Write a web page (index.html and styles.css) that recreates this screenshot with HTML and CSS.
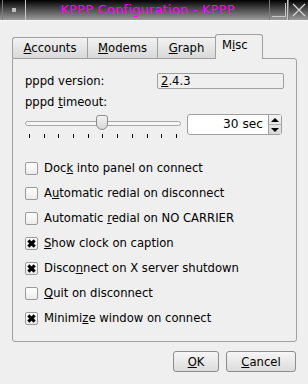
FILE: index.html
```html
<!DOCTYPE html>
<html lang="en">

<head>
    <meta name="viewport" content="width=device-width, initial-scale=1.0" />
    <title>KPPP Configuration - KPPP</title>
    <link rel="stylesheet" href="styles.css">
</head>

<body>
    <div class="window">
        <div class="titlebar">
            <div class="tb-btn menu"><span></span></div>
            <div class="tb-title">KPPP Configuration - KPPP</div>
            <div class="tb-btn mini"><span></span></div>
            <div class="tb-btn close">
                <svg width="16" height="16" viewBox="0 0 16 16">
                    <path d="M2 2 L14 14 M14 2 L2 14" stroke="#d8d8d8" stroke-width="1.2" fill="none" />
                </svg>
            </div>
        </div>

        <div class="dialog">
            <div class="tabs">
                <div class="tab"><u>A</u>ccounts</div>
                <div class="tab"><u>M</u>odems</div>
                <div class="tab"><u>G</u>raph</div>
                <div class="tab active">M<u>i</u>sc</div>
            </div>

            <div class="panel">
                <div class="row">
                    <span class="label">pppd version:</span>
                    <div class="version"><u>2</u>.4.3</div>
                </div>
                <div class="label timeout">pppd <u>t</u>imeout:</div>
                <div class="slider-row">
                    <div class="slider">
                        <div class="track">
                            <div class="handle"></div>
                        </div>
                        <div class="ticks">
                            <i></i><i></i><i></i><i></i><i></i><i></i>
                            <i></i><i></i><i></i><i></i><i></i>
                        </div>
                    </div>
                    <div class="spin">
                        <div class="spin-value">30 sec</div>
                        <div class="spin-arrows">
                            <div class="arrow up"></div>
                            <div class="arrow down"></div>
                        </div>
                    </div>
                </div>

                <div class="checks">
                    <div class="check"><span class="box"></span><span>Doc<u>k</u> into panel on connect</span></div>
                    <div class="check"><span class="box"></span><span>A<u>u</u>tomatic redial on disconnect</span></div>
                    <div class="check"><span class="box"></span><span>Automatic <u>r</u>edial on NO CARRIER</span></div>
                    <div class="check"><span class="box on"></span><span><u>S</u>how clock on caption</span></div>
                    <div class="check"><span class="box on"></span><span>Disco<u>n</u>nect on X server shutdown</span></div>
                    <div class="check"><span class="box"></span><span><u>Q</u>uit on disconnect</span></div>
                    <div class="check"><span class="box on"></span><span>Minimi<u>z</u>e window on connect</span></div>
                </div>
            </div>

            <div class="buttons">
                <button class="btn ok"><u>O</u>K</button>
                <button class="btn cancel"><u>C</u>ancel</button>
            </div>
        </div>
    </div>
</body>

</html>
```

FILE: styles.css
```css
* {
    padding: 0;
    margin: 0;
    box-sizing: border-box;
    font-family: "DejaVu Sans", sans-serif;
}

body {
    background-color: #efefef;
    width: 308px;
    height: 384px;
    overflow: hidden;
}

u {
    text-decoration: underline;
    text-underline-offset: 1px;
}

/* title bar */

.titlebar {
    height: 21px;
    display: flex;
    align-items: stretch;
    background: linear-gradient(#000000, #3a3a3a 35%, #9c9c9c);
    border-bottom: 1px solid #f8f8f8;
}

.tb-btn {
    display: flex;
    align-items: center;
    justify-content: center;
    border-left: 1px solid #7a7a7a;
    border-right: 1px solid #c8c8c8;
}

.tb-btn.menu {
    width: 24px;
    margin-left: 2px;
}

.tb-btn.menu span {
    width: 4px;
    height: 4px;
    background-color: #bdbdbd;
}

.tb-title {
    flex: 1;
    text-align: center;
    color: #ff00ff;
    font-size: 13px;
    line-height: 20px;
    letter-spacing: 0.2px;
}

.tb-btn.mini {
    width: 19px;
}

.tb-btn.mini span {
    width: 14px;
    height: 14px;
    border-bottom: 1px solid #c8c8c8;
    border-right: 1px solid #c8c8c8;
}

.tb-btn.close {
    width: 20px;
    border-right: none;
}

/* dialog */

.dialog {
    padding: 12px 12px 0 12px;
    font-size: 11.6px;
    color: #000;
}

.tabs {
    display: flex;
    align-items: flex-end;
    height: 25px;
    position: relative;
    z-index: 1;
}

.tab {
    height: 21px;
    padding: 0 8px;
    line-height: 20px;
    border: 1px solid #a0a0a0;
    border-bottom: none;
    border-right: none;
    background: linear-gradient(#f2f2f2, #d9d9d9);
    text-align: center;
}

.tab:first-child {
    width: 75px;
    border-radius: 3px 0 0 0;
}

.tab:nth-child(2) {
    width: 70px;
}

.tab:nth-child(3) {
    width: 58px;
}

.tab.active {
    width: 48px;
    height: 25px;
    line-height: 21px;
    background: #efefef;
    border-right: 1px solid #a0a0a0;
    border-radius: 3px 3px 0 0;
    margin-bottom: -1px;
    padding-bottom: 1px;
    text-align: left;
    padding-left: 6px;
}

.panel {
    width: 285px;
    height: 284px;
    border: 1px solid #a0a0a0;
    border-radius: 0 3px 3px 3px;
    padding: 14px 12px 0 12px;
}

.row {
    display: flex;
    justify-content: space-between;
    align-items: center;
}

.version {
    width: 127px;
    height: 16px;
    line-height: 14px;
    padding-left: 3px;
    border: 1px solid #a0a0a0;
    border-radius: 2px;
}

.label.timeout {
    display: block;
    margin-top: 6px;
    line-height: 14px;
}

.slider-row {
    display: flex;
    justify-content: space-between;
    margin-top: 5px;
}

.slider {
    width: 156px;
    padding-top: 7px;
}

.track {
    height: 5px;
    border: 1px solid #a8a8a8;
    border-radius: 3px;
    background-color: #f6f6f6;
    position: relative;
}

.handle {
    position: absolute;
    left: 70px;
    top: -7px;
    width: 12px;
    height: 15px;
    border: 1px solid #8c8c8c;
    border-radius: 3px 3px 6px 6px;
    background: linear-gradient(#f4f4f4, #d6d6d6);
}

.ticks {
    display: flex;
    justify-content: space-between;
    padding: 0 4px;
    margin-top: 8px;
}

.ticks i {
    width: 1px;
    height: 4px;
    background-color: #000;
}

.spin {
    width: 95px;
    height: 21px;
    border: 1px solid #a0a0a0;
    border-radius: 3px;
    display: flex;
    background-color: #fff;
    margin-right: 2px;
}

.spin-value {
    flex: 1;
    text-align: right;
    line-height: 19px;
    padding-right: 5px;
    font-size: 12.2px;
}

.spin-arrows {
    width: 13px;
    display: flex;
    flex-direction: column;
    border-left: 1px solid #a0a0a0;
    background: linear-gradient(#f4f4f4, #d8d8d8);
}

.arrow {
    flex: 1;
    display: flex;
    align-items: center;
    justify-content: center;
}

.arrow.up {
    border-bottom: 1px solid #b0b0b0;
}

.arrow.up::after,
.arrow.down::after {
    content: "";
    border-left: 4px solid transparent;
    border-right: 4px solid transparent;
}

.arrow.up::after {
    border-bottom: 4px solid #000;
}

.arrow.down::after {
    border-top: 4px solid #000;
}

.checks {
    margin-top: 23px;
    display: flex;
    flex-direction: column;
    gap: 11px;
}

.check {
    display: flex;
    align-items: center;
    gap: 6px;
    height: 14px;
    line-height: 14px;
}

.box {
    width: 13px;
    height: 13px;
    border: 1px solid #9a9a9a;
    border-radius: 2px;
    background: linear-gradient(#ffffff, #ececec);
    position: relative;
}

.box.on::before,
.box.on::after {
    content: "";
    position: absolute;
    left: 1px;
    top: 4px;
    width: 9px;
    height: 3px;
    background-color: #000;
}

.box.on::before {
    transform: rotate(45deg);
}

.box.on::after {
    transform: rotate(-45deg);
}

.buttons {
    display: flex;
    justify-content: flex-end;
    gap: 7px;
    margin-top: 9px;
    padding-right: 0;
}

.btn {
    height: 21px;
    font-size: 11.6px;
    border: 1px solid #8c8c8c;
    border-radius: 3px;
    background: linear-gradient(#f6f6f6, #dcdcdc);
    color: #000;
}

.btn.ok {
    width: 46px;
}

.btn.cancel {
    width: 70px;
}
```
